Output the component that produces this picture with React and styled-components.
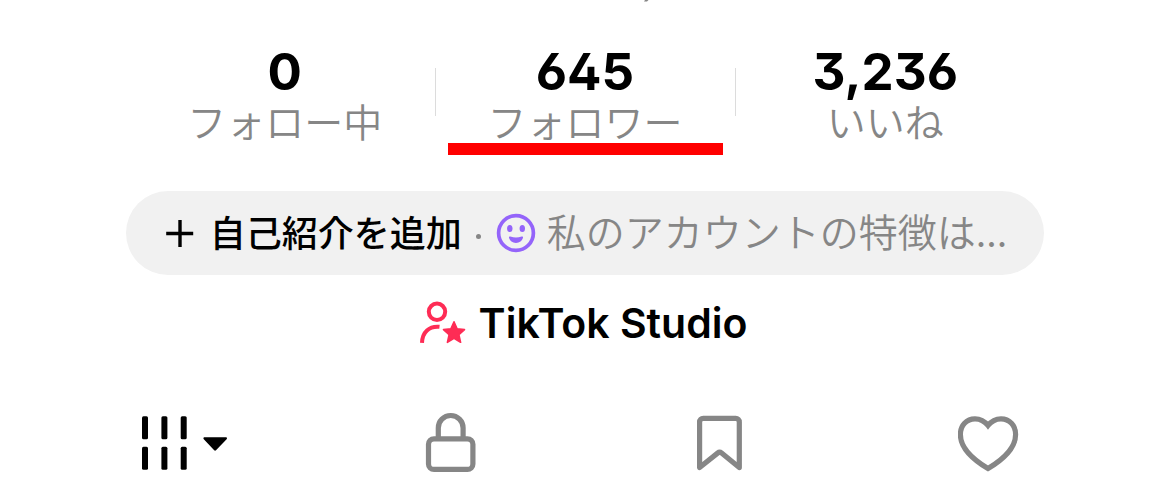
import React from "react";
import styled, { createGlobalStyle } from "styled-components";

const GlobalStyle = createGlobalStyle`
  *, *::before, *::after { box-sizing: border-box; }
  body {
    margin: 0;
    background: #fff;
    color: #000;
    font-family: Inter, "Noto Sans CJK JP", sans-serif;
  }
`;

const Page = styled.main`
  display: flex;
  flex-direction: column;
  align-items: center;
  overflow: hidden;
`;

const HandleTail = styled.svg`
  display: block;
  width: 6px;
  height: 2px;
  margin-left: 122px;
`;

const Stats = styled.div`
  display: grid;
  grid-template-columns: repeat(3, 1fr);
  width: 77%;
  padding-top: 42px;
`;

const Stat = styled.a`
  position: relative;
  display: flex;
  flex-direction: column;
  align-items: center;
  color: inherit;
  text-decoration: none;

  & + &::before {
    content: "";
    position: absolute;
    left: 0;
    top: 24px;
    width: 1px;
    height: 48px;
    background: #dcdcdc;
  }
`;

const Count = styled.strong`
  font-size: 51px;
  font-weight: 700;
  line-height: 56px;
  font-feature-settings: "ss01", "cv09";
`;

const Label = styled.span`
  font-family: "Noto Sans CJK JP", sans-serif;
  font-size: 39px;
  font-weight: 350;
  line-height: 40px;
  color: #868686;
`;

const Marker = styled.span`
  position: absolute;
  left: 13px;
  right: 12px;
  top: 99px;
  height: 12px;
  background: #f00;
`;

const BioButton = styled.button`
  display: flex;
  align-items: center;
  width: 78.5%;
  height: 84px;
  margin-top: 51px;
  padding: 0 30px 0 39px;
  border: 0;
  border-radius: 42px;
  background: #f1f1f1;
  color: #000;
  font-family: "Noto Sans CJK JP", sans-serif;
  white-space: nowrap;
  cursor: pointer;
`;

const BioAction = styled.span`
  margin-left: 16px;
  padding-bottom: 4px;
  font-size: 36px;
  font-weight: 500;
  line-height: 48px;
`;

const Dot = styled.span`
  flex: none;
  width: 5px;
  height: 5px;
  margin: 6px 15px 0 14px;
  border-radius: 50%;
  background: #868686;
`;

const BioHint = styled.span`
  margin-left: 11px;
  padding-bottom: 6px;
  font-size: 39px;
  font-weight: 350;
  line-height: 48px;
  color: #868686;
`;

const StudioLink = styled.a`
  display: flex;
  align-items: center;
  gap: 13px;
  margin-top: 23px;
  padding-right: 4px;
  color: #000;
  font-size: 41px;
  font-weight: 600;
  line-height: 50px;
  text-decoration: none;
`;

const Tabs = styled.nav`
  display: grid;
  grid-template-columns: repeat(4, 1fr);
  width: 92%;
  margin-top: 64px;
`;

const Tab = styled.button`
  display: flex;
  justify-content: center;
  align-items: center;
  height: 62px;
  padding: 0;
  border: 0;
  background: none;
  color: ${({ $active }) => ($active ? "#000" : "#868686")};
  cursor: pointer;
`;

const Icon = styled.svg`
  display: block;
  flex: none;
`;

const stats = [
  { count: "0", label: "フォロー中" },
  { count: "645", label: "フォロワー", marked: true },
  { count: "3,236", label: "いいね" },
];

const PlusIcon = () => (
  <Icon width="29" height="29" viewBox="0 0 29 29" aria-hidden="true">
    <path d="M15 1v27M1.2 14.500h27" stroke="currentColor" strokeWidth="3.400" fill="none" />
  </Icon>
);

const SmileIcon = () => (
  <Icon width="40" height="40" viewBox="0 0 40 40" fill="#9464fa" aria-hidden="true">
    <circle cx="20" cy="20" r="17.4" fill="none" stroke="#9464fa" strokeWidth="3.7" />
    <ellipse cx="13.800" cy="15.600" rx="2.700" ry="3.500" />
    <ellipse cx="26.300" cy="15.600" rx="2.700" ry="3.500" />
    <path d="M14.300 23.600q5.700 2 11.400 0c1-.3 1.500.4 1.300 1.200-.8 3-3.600 5.100-7 5.100s-6.200-2.100-7-5.100c-.2-.8.300-1.500 1.300-1.200z" />
  </Icon>
);

const StudioIcon = () => (
  <Icon width="47" height="44" viewBox="0 0 47 44" aria-hidden="true">
    <g fill="none" stroke="#fe2c55" strokeWidth="4">
      <circle cx="18" cy="10.800" r="8.200" />
      <path d="M3 41.800C3.400 31.300 10 24.800 20.500 25.800" />
    </g>
    <path
      d="M35 20.800l3.100 7 7.400.8-5.600 5.100 1.700 7.600-6.600-3.900-6.600 3.900 1.700-7.600-5.600-5.100 7.400-.8z"
      fill="#fe2c55"
      stroke="#fe2c55"
      strokeWidth="1.600"
      strokeLinejoin="round"
    />
  </Icon>
);

const GridIcon = () => (
  <Icon width="92" height="60" viewBox="0 0 92 60" fill="currentColor" aria-hidden="true">
    {[7, 26.400, 45.700].map((x) => (
      <React.Fragment key={x}>
        <rect x={x} y="3.300" width="6" height="23" rx="1.500" />
        <rect x={x} y="33.800" width="6" height="23" rx="1.500" />
      </React.Fragment>
    ))}
    <path d="M69.600 24.300h21.200c1.100 0 1.600 1.100.8 1.900L81 37.300c-.6.6-1.200.6-1.800 0L68.800 26.200c-.8-.8-.3-1.900.8-1.900z" />
  </Icon>
);

const LockIcon = () => (
  <Icon width="54" height="62" viewBox="0 0 54 62" fill="none" stroke="currentColor" strokeWidth="5.200" aria-hidden="true">
    <rect x="5.500" y="26.800" width="44.400" height="30.600" rx="5.500" />
    <path d="M15.300 26.500V15.900a12.400 12.400 0 0 1 24.800 0V26.500" />
  </Icon>
);

const BookmarkIcon = () => (
  <Icon width="48" height="60" viewBox="0 0 48 60" fill="none" stroke="currentColor" strokeWidth="5.200" strokeLinejoin="round" aria-hidden="true">
    <path d="M7.200 5.400h32.500a3.600 3.600 0 0 1 3.600 3.600v45.600L25.600 40.100q-2-1.600-4 0L3.600 54.600V9a3.600 3.600 0 0 1 3.600-3.600z" />
  </Icon>
);

const HeartIcon = () => (
  <Icon width="62" height="60" viewBox="1 0 62 60" fill="none" stroke="currentColor" strokeWidth="5.200" aria-hidden="true">
    <path d="M31 12.500C27.500 8 23 5.800 18 5.800 9.500 5.800 3.400 12.500 3.400 21.500c0 12.500 10 23.500 27.600 34C48.600 45 58.600 34 58.600 21.500 58.600 12.500 52.500 5.800 44 5.800c-5 0-9.500 2.200-13 6.700z" />
  </Icon>
);

const tabs = [
  { name: "投稿", Glyph: GridIcon },
  { name: "非公開", Glyph: LockIcon },
  { name: "保存済み", Glyph: BookmarkIcon },
  { name: "いいね", Glyph: HeartIcon },
];

export default function App() {
  return (
    <>
      <GlobalStyle />
      <Page>
        <HandleTail viewBox="0 0 6 2" aria-hidden="true">
          <path d="M2 0h3.500L4 1.600H1z" fill="#868686" />
        </HandleTail>
        <Stats>
          {stats.map(({ count, label, marked }) => (
            <Stat key={label} href="#">
              <Count>{count}</Count>
              <Label>{label}</Label>
              {marked && <Marker />}
            </Stat>
          ))}
        </Stats>
        <BioButton type="button">
          <PlusIcon />
          <BioAction>自己紹介を追加</BioAction>
          <Dot />
          <SmileIcon />
          <BioHint>私のアカウントの特徴は...</BioHint>
        </BioButton>
        <StudioLink href="#">
          <StudioIcon />
          TikTok Studio
        </StudioLink>
        <Tabs>
          {tabs.map(({ name, Glyph }, i) => (
            <Tab key={name} type="button" aria-label={name} $active={i === 0}>
              <Glyph />
            </Tab>
          ))}
        </Tabs>
      </Page>
    </>
  );
}
